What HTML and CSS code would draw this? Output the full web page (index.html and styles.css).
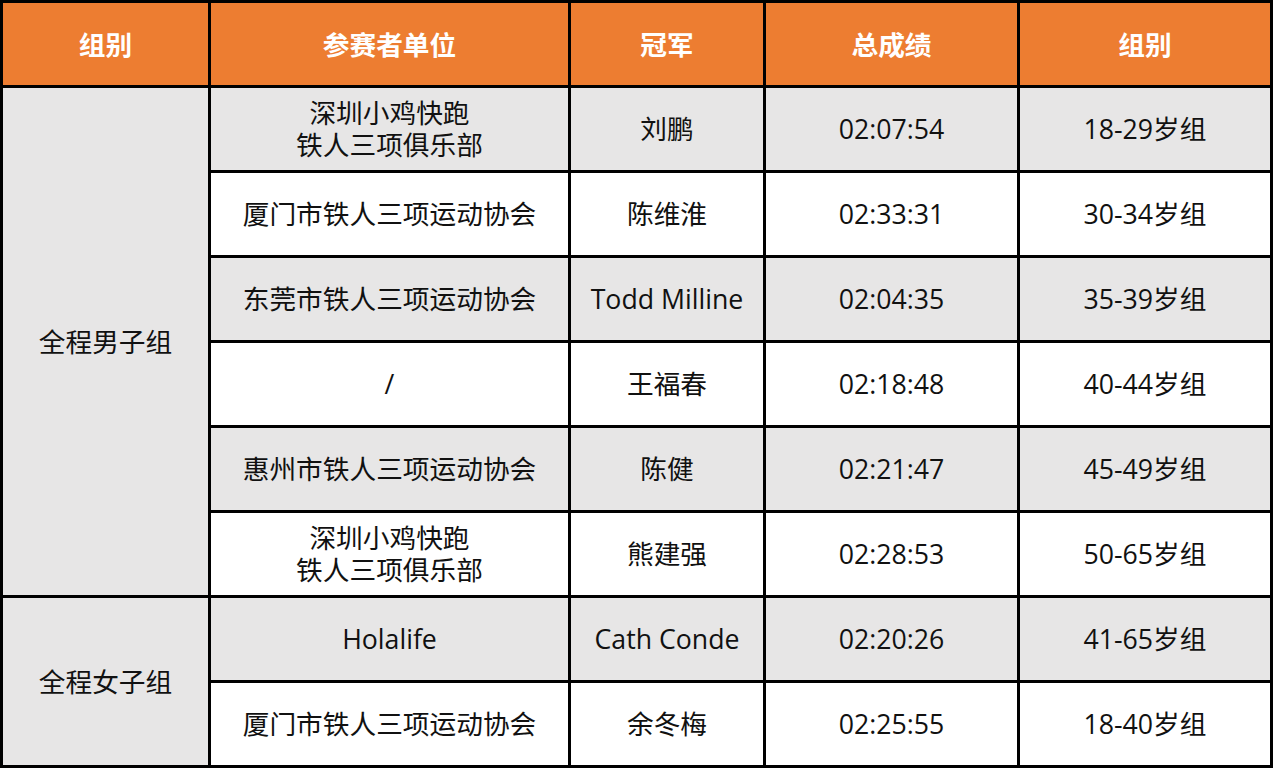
FILE: index.html
```html
<!DOCTYPE html>
<html lang="zh-CN">
<head>
<meta charset="utf-8">
<title>冠军成绩</title>
<link rel="stylesheet" href="styles.css">
</head>
<body>
<div class="table">
  <div class="cell head">组别</div>
  <div class="cell head">参赛者单位</div>
  <div class="cell head">冠军</div>
  <div class="cell head">总成绩</div>
  <div class="cell head">组别</div>

  <div class="cell gray group men">全程男子组</div>
  <div class="cell gray">深圳小鸡快跑<br>铁人三项俱乐部</div>
  <div class="cell gray">刘鹏</div>
  <div class="cell gray">02:07:54</div>
  <div class="cell gray">18-29岁组</div>

  <div class="cell">厦门市铁人三项运动协会</div>
  <div class="cell">陈维淮</div>
  <div class="cell">02:33:31</div>
  <div class="cell">30-34岁组</div>

  <div class="cell gray">东莞市铁人三项运动协会</div>
  <div class="cell gray">Todd Milline</div>
  <div class="cell gray">02:04:35</div>
  <div class="cell gray">35-39岁组</div>

  <div class="cell">/</div>
  <div class="cell">王福春</div>
  <div class="cell">02:18:48</div>
  <div class="cell">40-44岁组</div>

  <div class="cell gray">惠州市铁人三项运动协会</div>
  <div class="cell gray">陈健</div>
  <div class="cell gray">02:21:47</div>
  <div class="cell gray">45-49岁组</div>

  <div class="cell">深圳小鸡快跑<br>铁人三项俱乐部</div>
  <div class="cell">熊建强</div>
  <div class="cell">02:28:53</div>
  <div class="cell">50-65岁组</div>

  <div class="cell gray group women">全程女子组</div>
  <div class="cell gray">Holalife</div>
  <div class="cell gray">Cath Conde</div>
  <div class="cell gray">02:20:26</div>
  <div class="cell gray">41-65岁组</div>

  <div class="cell">厦门市铁人三项运动协会</div>
  <div class="cell">余冬梅</div>
  <div class="cell">02:25:55</div>
  <div class="cell">18-40岁组</div>
</div>
</body>
</html>
```

FILE: styles.css
```css
html, body {
  margin: 0;
  padding: 0;
  background: #ffffff;
}

.table {
  display: grid;
  grid-template-columns: 205px 357px 192px 251px 250px;
  grid-template-rows: 82px repeat(8, 82px);
  gap: 3px;
  padding: 3px;
  background: #000000;
  width: 1267px;
  font-family: "Open Sans", "Noto Sans CJK SC", sans-serif;
  font-size: 26.7px;
  color: #111111;
}

.cell {
  display: flex;
  align-items: center;
  justify-content: center;
  text-align: center;
  background: #ffffff;
  line-height: 32px;
}

.head {
  background: #ed7d31;
  color: #ffffff;
  font-weight: bold;
  font-family: "Noto Sans CJK SC", sans-serif;
}

.gray {
  background: #e7e6e6;
}

.group.men {
  grid-column: 1;
  grid-row: 2 / span 6;
}

.group.women {
  grid-column: 1;
  grid-row: 8 / span 2;
}
```
